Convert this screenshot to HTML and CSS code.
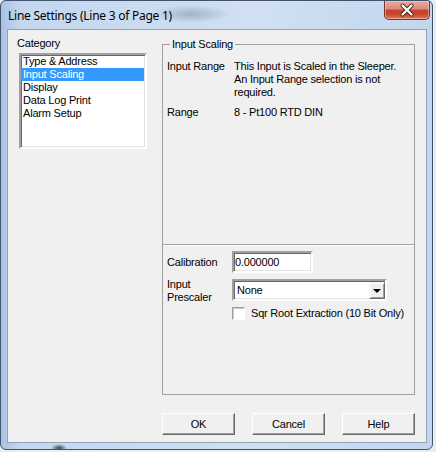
FILE: index.html
```html
<!DOCTYPE html>
<html lang="en">
<head>
    <meta charset="UTF-8">
    <title>Line Settings</title>
    <link rel="stylesheet" href="styles.css">
</head>
<body>
    <div class="window">
        <div class="titlebar">
            <span class="title">Line Settings (Line 3 of Page 1)</span>
            <button class="close" type="button">
                <svg width="46" height="19" viewBox="0 0 46 19">
                    <path d="M18.5 5.5 L27.5 14.5 M27.5 5.5 L18.5 14.5" stroke="#4a2620" stroke-width="4" stroke-linecap="round"/>
                    <path d="M18.5 5.5 L27.5 14.5 M27.5 5.5 L18.5 14.5" stroke="#fff" stroke-width="2.2" stroke-linecap="round"/>
                </svg>
            </button>
        </div>

        <div class="client">
            <div class="main">
                <div class="category">
                    <div class="category-label">Category</div>
                    <ul class="listbox">
                        <li>Type &amp; Address</li>
                        <li class="selected">Input Scaling</li>
                        <li>Display</li>
                        <li>Data Log Print</li>
                        <li>Alarm Setup</li>
                    </ul>
                </div>

                <fieldset class="group">
                    <legend>Input Scaling</legend>
                    <div class="info">
                        <span class="info-label">Input Range</span>
                        <span class="info-value">This Input is Scaled in the Sleeper.<br>An Input Range selection is not<br>required.</span>
                        <span class="info-label">Range</span>
                        <span class="info-value">8 - Pt100 RTD DIN</span>
                    </div>
                    <div class="settings">
                        <label class="field-label" for="calibration">Calibration</label>
                        <input class="textbox" id="calibration" type="text" value="0.000000">

                        <span class="field-label">Input<br>Prescaler</span>
                        <div class="combo">
                            <span class="combo-text">None</span>
                            <span class="combo-arrow"></span>
                        </div>

                        <div class="check-row">
                            <span class="checkbox"></span>
                            <span>Sqr Root Extraction (10 Bit Only)</span>
                        </div>
                    </div>
                </fieldset>
            </div>

            <div class="buttons">
                <button class="btn" type="button">OK</button>
                <button class="btn" type="button">Cancel</button>
                <button class="btn" type="button">Help</button>
            </div>
        </div>
    </div>
</body>
</html>
```

FILE: styles.css
```css
body {
    margin: 0;
    padding: 0;
    background-color: #e9eef4;
    font-family: "Liberation Sans", Arial, sans-serif;
    font-size: 11px;
    letter-spacing: -0.2px;
    color: #000;
}

.window {
    box-sizing: border-box;
    width: 433px;
    height: 450px;
    border: 1px solid #40536c;
    border-radius: 6px;
    padding: 0 5px 6px 6px;
    display: flex;
    flex-direction: column;
    background:
        radial-gradient(ellipse 40px 9px at 190px 13px, rgba(80, 100, 125, 0.35), transparent),
        radial-gradient(ellipse 8px 4px at 58px 447px, rgba(20, 30, 40, 0.8), transparent),
        linear-gradient(to right, #a9c3e2 0px, #c4d7ee 20px, #d1e0f2 60%, #c2d6ed 100%);
}

/* title bar */
.titlebar {
    height: 28px;
    display: flex;
    align-items: center;
}

.title {
    font-family: "Noto Sans", "Open Sans", sans-serif;
    font-size: 12px;
    letter-spacing: -0.25px;
    padding-left: 1px;
    margin-top: 1px;
}

.close {
    align-self: flex-start;
    margin-left: auto;
    margin-right: -3px;
    width: 46px;
    height: 19px;
    padding: 0;
    border: 1px solid #7a3327;
    border-top: none;
    border-radius: 0 0 5px 5px;
    background: linear-gradient(#e8ab9e 0%, #dc8d7c 42%, #c4452b 52%, #c4452b 72%, #de7a5f 100%);
    box-shadow: inset 0 0 0 1px rgba(255, 210, 200, 0.5);
}

.close svg {
    display: block;
    margin: -1px 0 0 -1px;
}

/* client area */
.client {
    flex: 1;
    display: flex;
    flex-direction: column;
    background-color: #f0f0f0;
    border: 1px solid #8fa2ba;
    padding: 7px 11px 7px 11px;
}

.main {
    flex: 1;
    display: flex;
    gap: 15px;
}

.category {
    width: 128px;
}

.category-label {
    line-height: 13px;
    margin: 0 0 3px -2px;
}

.listbox {
    box-sizing: border-box;
    list-style: none;
    margin: 0;
    padding: 0;
    height: 96px;
    background-color: #fff;
    border: 2px solid;
    border-color: #a0a0a0 #fff #fff #a0a0a0;
    box-shadow: inset 1px 1px 0 #696969, inset -1px -1px 0 #e3e3e3;
}

.listbox li {
    line-height: 13px;
    padding-left: 2px;
}

.listbox .selected {
    background-color: #3399ff;
    color: #fff;
    margin-right: 1px;
}

/* group box */
.group {
    flex: 1;
    margin: 1px 0 0 0;
    padding: 0;
    min-width: 0;
    border: 1px solid #a0a0a0;
    display: flex;
    flex-direction: column;
}

.group legend {
    line-height: 13px;
    padding: 0 2px;
    margin-left: 7px;
}

.info {
    box-sizing: border-box;
    height: 193px;
    padding: 9px 4px 0 4px;
    display: grid;
    grid-template-columns: 67px 1fr;
    align-content: start;
    row-gap: 7px;
    line-height: 13px;
}

.settings {
    flex: 1;
    border-top: 1px solid #a0a0a0;
    box-shadow: inset 0 1px 0 #fff;
    padding: 6px 4px 0 4px;
    display: grid;
    grid-template-columns: 65px 1fr;
    align-content: start;
    align-items: center;
    row-gap: 5px;
    line-height: 13px;
}

.field-label {
    line-height: 13px;
}

.textbox {
    box-sizing: border-box;
    width: 81px;
    height: 22px;
    margin: 0;
    padding: 0 0 0 1px;
    font: inherit;
    letter-spacing: inherit;
    background-color: #fff;
    border: 2px solid;
    border-color: #a0a0a0 #fff #fff #a0a0a0;
    box-shadow: inset 1px 1px 0 #696969, inset -1px -1px 0 #e3e3e3;
    outline: none;
}

.combo {
    box-sizing: border-box;
    align-self: start;
    margin-top: 1px;
    width: 155px;
    height: 22px;
    display: flex;
    align-items: stretch;
    background-color: #fff;
    border: 2px solid;
    border-color: #a0a0a0 #fff #fff #a0a0a0;
    box-shadow: inset 1px 1px 0 #696969, inset -1px -1px 0 #e3e3e3;
}

.combo-text {
    flex: 1;
    padding-left: 3px;
    display: flex;
    align-items: center;
}

.combo-arrow {
    box-sizing: border-box;
    width: 16px;
    margin: 1px 0 0 0;
    background-color: #f0f0f0;
    border: 1px solid;
    border-color: #f0f0f0 #696969 #696969 #f0f0f0;
    box-shadow: inset 1px 1px 0 #fff, inset -1px -1px 0 #a0a0a0;
    display: flex;
    align-items: center;
    justify-content: center;
}

.combo-arrow::after {
    content: "";
    border-left: 4px solid transparent;
    border-right: 4px solid transparent;
    border-top: 4px solid #000;
    margin-top: 1px;
}

.check-row {
    grid-column: 2;
    margin-top: -2px;
    display: flex;
    align-items: center;
    gap: 6px;
}

.checkbox {
    box-sizing: border-box;
    width: 13px;
    height: 13px;
    background-color: #fff;
    border: 1px solid;
    border-color: #a0a0a0 #fff #fff #a0a0a0;
    box-shadow: inset 1px 1px 0 #c8c8c8;
}

/* bottom buttons */
.buttons {
    margin-top: 18px;
    display: flex;
    justify-content: flex-end;
    gap: 17px;
}

.btn {
    box-sizing: border-box;
    width: 73px;
    height: 22px;
    padding: 0;
    font: inherit;
    letter-spacing: inherit;
    color: #000;
    background-color: #f0f0f0;
    border: 1px solid;
    border-color: #fff #696969 #696969 #fff;
    box-shadow: inset -1px -1px 0 #a0a0a0;
}
```
